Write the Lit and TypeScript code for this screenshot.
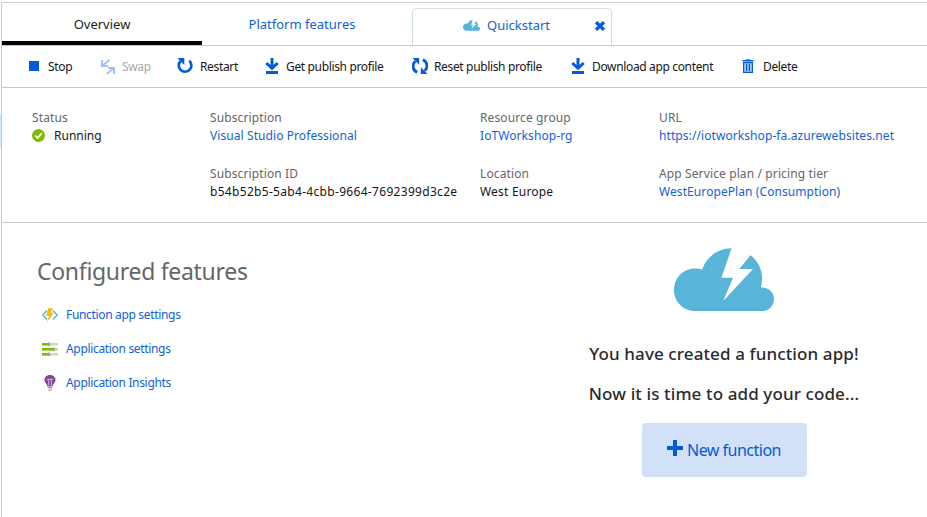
import { LitElement, html, svg, css } from "lit";
import { customElement, property } from "lit/decorators.js";

const CLOUD = svg`<path fill="#59b4d9" fill-rule="evenodd" d="M21 63C9 63 0 53.500 0 42C0 30 9 20.500 21 20.500C23.500 20.500 26 20.700 28.200 21.500C32 9.500 43 0.500 57.500 0.300L47.500 29.800H59L49.200 53L79 21H65.300L76.500 7.200C84 13 88 21 88 30C88 33.500 87.700 36.500 87 39.500C94.500 39 100 44.500 100 51C100 57.500 95 63 89 63Z"/>`;

const ICONS: Record<string, { box: string; body: unknown }> = {
  stop: { box: "0 0 10 10", body: svg`<rect width="10" height="10" fill="#015cda"/>` },
  swap: {
    box: "0 0 16 16",
    body: svg`<g fill="none" stroke="#a0c3f3" stroke-width="2"><path d="M9.500 1L2.500 6.500M2 1V7H8"/><path d="M6.500 15L13.500 9.500M8 9H14V15"/></g>`,
  },
  restart: {
    box: "0 0 16 16",
    body: svg`<path fill="none" stroke="#015cda" stroke-width="2.700" d="M12.200 2.700A6.300 6.300 0 1 1 3.600 3"/><path fill="#015cda" d="M0.500 0H7.300V7Z"/>`,
  },
  download: {
    box: "0 0 14 16",
    body: svg`<path fill="none" stroke="#015cda" stroke-width="3" d="M7 0V10.500M1.300 5L7 10.300L12.700 5"/><rect x="1" y="13" width="12" height="3" fill="#015cda"/>`,
  },
  reset: {
    box: "0 0 16 16",
    body: svg`<g fill="none" stroke="#015cda" stroke-width="2.800"><path d="M5.200 14.300A6.500 6.500 0 0 1 3.400 3.300"/><path d="M10.800 1.700A6.500 6.500 0 0 1 12.600 12.700"/></g><path fill="#015cda" d="M0.500 0H7.200V6.800ZM15.500 16H8.800V9.200Z"/>`,
  },
  trash: {
    box: "0 0 12 14",
    body: svg`<path fill="#5d97e8" d="M4 0H8V1H4Z"/><path fill="#015cda" d="M0.500 1H11.500V2.500H0.500Z"/><path fill="#a9c8f4" d="M1.500 3.500H10.500V13.500H1.500Z"/><path fill="none" stroke="#015cda" stroke-width="1.200" d="M1.600 3.600V13.400H10.400V3.600ZM4.600 5V12M7.400 5V12"/>`,
  },
  cloud: { box: "0 0 100 64", body: CLOUD },
  close: { box: "0 0 10 10", body: svg`<path stroke="#015cda" stroke-width="3.400" d="M1 1.200L9 8.800M9 1.200L1 8.800"/>` },
  check: {
    box: "0 0 13 13",
    body: svg`<circle cx="6.500" cy="6.500" r="6.500" fill="#7fba00"/><path fill="none" stroke="#fff" stroke-width="1.700" d="M3.300 6.600L5.700 8.900L9.700 4.300"/>`,
  },
  bolt: {
    box: "0 0 16 14",
    body: svg`<path fill="none" stroke="#59b4d9" stroke-width="1.400" d="M5 2.500L0.900 7L5 11.500M11 2.500L15.100 7L11 11.500"/><path fill="#fcb813" d="M6.500 0H11L8.700 4.800H12L5 14L6.900 7.700H4Z"/>`,
  },
  sliders: {
    box: "0 0 16 14",
    body: svg`<path fill="#c5e29a" d="M0 1H16V3.500H0ZM0 6H16V8.500H0ZM0 11H16V13.500H0Z"/><path fill="#7fba00" d="M0 1H6V3.500H0ZM0 6H11V8.500H0ZM0 11H6V13.500H0Z"/><path fill="#9aa39a" d="M6 0.500H8V4H6ZM11 5.500H13V9H11ZM6 10.500H8V14H6Z"/>`,
  },
  bulb: {
    box: "0 0 12 16",
    body: svg`<path fill="#804998" d="M6 0C9.500 0 11.500 2.200 11.500 5C11.500 8 8.800 8.500 8.500 11.500H3.500C3.200 8.500 0.500 8 0.500 5C0.500 2.200 2.500 0 6 0Z"/><path fill="none" stroke="#e6d9ec" stroke-width="0.800" d="M3.600 4.300H8.400L7.300 6V10.500M3.600 4.300L4.700 6V10.500"/><path fill="#7a7a7a" d="M3.800 12.300H8.200V13.300H3.800ZM4.500 14.500H7.500V15.500H4.500Z"/>`,
  },
  plus: { box: "0 0 16 16", body: svg`<path fill="#015cda" d="M6 0H10V6H16V10H10V16H6V10H0V6H6Z"/>` },
};

@customElement("ui-icon")
class UiIcon extends LitElement {
  @property() name = "";
  static styles = css`
    :host { display: block; flex: none; }
    svg { display: block; width: 100%; height: 100%; }
  `;
  render() {
    const icon = ICONS[this.name];
    return html`<svg viewBox=${icon.box} aria-hidden="true">${icon.body}</svg>`;
  }
}

const COMMANDS = [
  ["stop", "Stop"],
  ["swap", "Swap"],
  ["restart", "Restart"],
  ["download", "Get publish profile"],
  ["reset", "Reset publish profile"],
  ["download", "Download app content"],
  ["trash", "Delete"],
];

const DETAILS = [
  [["Status", "Running", "status"]],
  [["Subscription", "Visual Studio Professional", "link"], ["Subscription ID", "b54b52b5-5ab4-4cbb-9664-7692399d3c2e", "id"]],
  [["Resource group", "IoTWorkshop-rg", "link"], ["Location", "West Europe", "plain"]],
  [["URL", "https://iotworkshop-fa.azurewebsites.net", "link"], ["App Service plan / pricing tier", "WestEuropePlan (Consumption)", "link"]],
];

const FEATURES = [
  ["bolt", "Function app settings"],
  ["sliders", "Application settings"],
  ["bulb", "Application Insights"],
];

@customElement("app-root")
class AppRoot extends LitElement {
  static styles = css`
    :host { display: flex; height: 517px; background: #fff; color: #161616; overflow: hidden;
      font: 12px/18px "Noto Sans", sans-serif; white-space: nowrap; }
    * { box-sizing: border-box; }
    .edge { width: 1px; height: 34px; margin-top: 114px; background: #d5e8fa; flex: none; }
    .page { flex: 1; min-width: 0; margin-top: 2px; border-left: 1px solid #c8c8c8; border-top: 1px solid #d3d3d3; }
    .tabs { display: flex; height: 43px; border-bottom: 1px solid #c8c8c8; font-size: 13px; color: #1161d8; }
    .tab { width: 200px; height: 42px; text-align: center; line-height: 42px; }
    .active { color: #222; border-bottom: 4px solid #000; }
    .quick { width: 200px; height: 37px; margin: 5px 0 0 10px; border: 1px solid #cfdde5; border-bottom: 0;
      border-radius: 5px 5px 0 0; display: flex; align-items: center; line-height: 34px; padding: 0 0 4px 50px; }
    .quick ui-icon { width: 17px; height: 11px; margin-right: 7px; }
    .quick .close { width: 10px; height: 10px; margin: 1px 0 0 45px; }
    .commands { display: grid; grid-template-columns: 71px 77px 88px 147px 159px 171px 1fr; align-items: center;
      height: 42px; border-bottom: 1px solid #c8c8c8; padding-left: 27px; letter-spacing: -0.35px; }
    .cmd { display: flex; align-items: center; }
    .cmd ui-icon { margin-right: 7px; }
    .swap { color: #a9a9a9; }
    .cmd.stop ui-icon { width: 10px; height: 10px; margin: -2px 9px 0 0; }
    .swap ui-icon, .restart ui-icon, .reset ui-icon { width: 16px; height: 16px; }
    .cmd.swap ui-icon, .cmd.reset ui-icon { margin-right: 6px; }
    .cmd.download ui-icon { width: 14px; height: 16px; margin-top: -1px; }
    .cmd.reset ui-icon, .cmd.restart ui-icon { margin-top: -2px; }
    .cmd.trash ui-icon { width: 12px; height: 14px; margin: -2px 9px 0 0; }
    .details { display: grid; grid-template-columns: 178px 270px 179px 1fr; height: 135px; border-bottom: 1px solid #c8c8c8; padding: 21px 0 0 30px; }
    .pair { height: 56px; }
    .label { color: #666; letter-spacing: 0.12px; }
    .value { display: flex; align-items: center; }
    .link { color: #1161d8; letter-spacing: 0.08px; }
    .id { letter-spacing: 0.31px; }
    .plain { letter-spacing: 0.2px; }
    .status ui-icon { width: 13px; height: 13px; margin: -1px 9px 0 0; }
    .body { display: flex; }
    .features { flex: none; width: 500px; padding: 33px 0 0 35px; }
    h2 { margin: 0 0 20px; font-size: 23px; line-height: 30px; font-weight: 400; letter-spacing: -0.3px; color: #666; }
    .feature { display: flex; align-items: center; height: 18px; margin: 0 0 16px 5px; color: #1161d8; letter-spacing: -0.33px; }
    .feature ui-icon { width: 16px; height: 14px; margin-right: 8px; }
    .feature .bulb { height: 16px; }
    .start { flex: none; width: 444px; display: flex; flex-direction: column; align-items: center; padding-top: 25px; }
    .start > ui-icon { width: 100px; height: 64px; }
    .start p { margin: 0; font-size: 17px; font-weight: 500; line-height: 40px; color: #2b2b2b; letter-spacing: 0.11px; }
    .start p:first-of-type { margin-top: 22px; }
    .new { width: 165px; height: 54px; margin-top: 9px; border: 0; border-radius: 4px; background: #d2e1f8; color: #015cda;
      display: flex; align-items: center; justify-content: center; font: 16px/20px "Noto Sans", sans-serif; letter-spacing: -0.5px; padding: 0; }
    .new ui-icon { width: 16px; height: 16px; margin: -4px 4px 0 0; }
  `;
  render() {
    return html`
      <div class="edge"></div>
      <main class="page">
        <nav class="tabs">
          <div class="tab active"><span>Overview</span></div>
          <div class="tab"><span>Platform features</span></div>
          <div class="quick"><ui-icon name="cloud"></ui-icon><span>Quickstart</span><ui-icon class="close" name="close"></ui-icon></div>
        </nav>
        <div class="commands">
          ${COMMANDS.map(([i, t]) => html`<div class="cmd ${i}"><ui-icon name=${i}></ui-icon><span>${t}</span></div>`)}
        </div>
        <section class="details">
          ${DETAILS.map((col) => html`<div>${col.map(([l, v, k]) => html`<div class="pair"><div class="label">${l}</div>
            <div class="value ${k}">${k === "status" ? html`<ui-icon name="check"></ui-icon>` : ""}<span>${v}</span></div></div>`)}</div>`)}
        </section>
        <div class="body">
          <section class="features"><h2>Configured features</h2>
            ${FEATURES.map(([i, t]) => html`<div class="feature"><ui-icon class=${i} name=${i}></ui-icon><span>${t}</span></div>`)}
          </section>
          <section class="start"><ui-icon name="cloud"></ui-icon>
            <p>You have created a function app!</p><p>Now it is time to add your code...</p>
            <button class="new"><ui-icon name="plus"></ui-icon><span>New function</span></button>
          </section>
        </div>
      </main>`;
  }
}
